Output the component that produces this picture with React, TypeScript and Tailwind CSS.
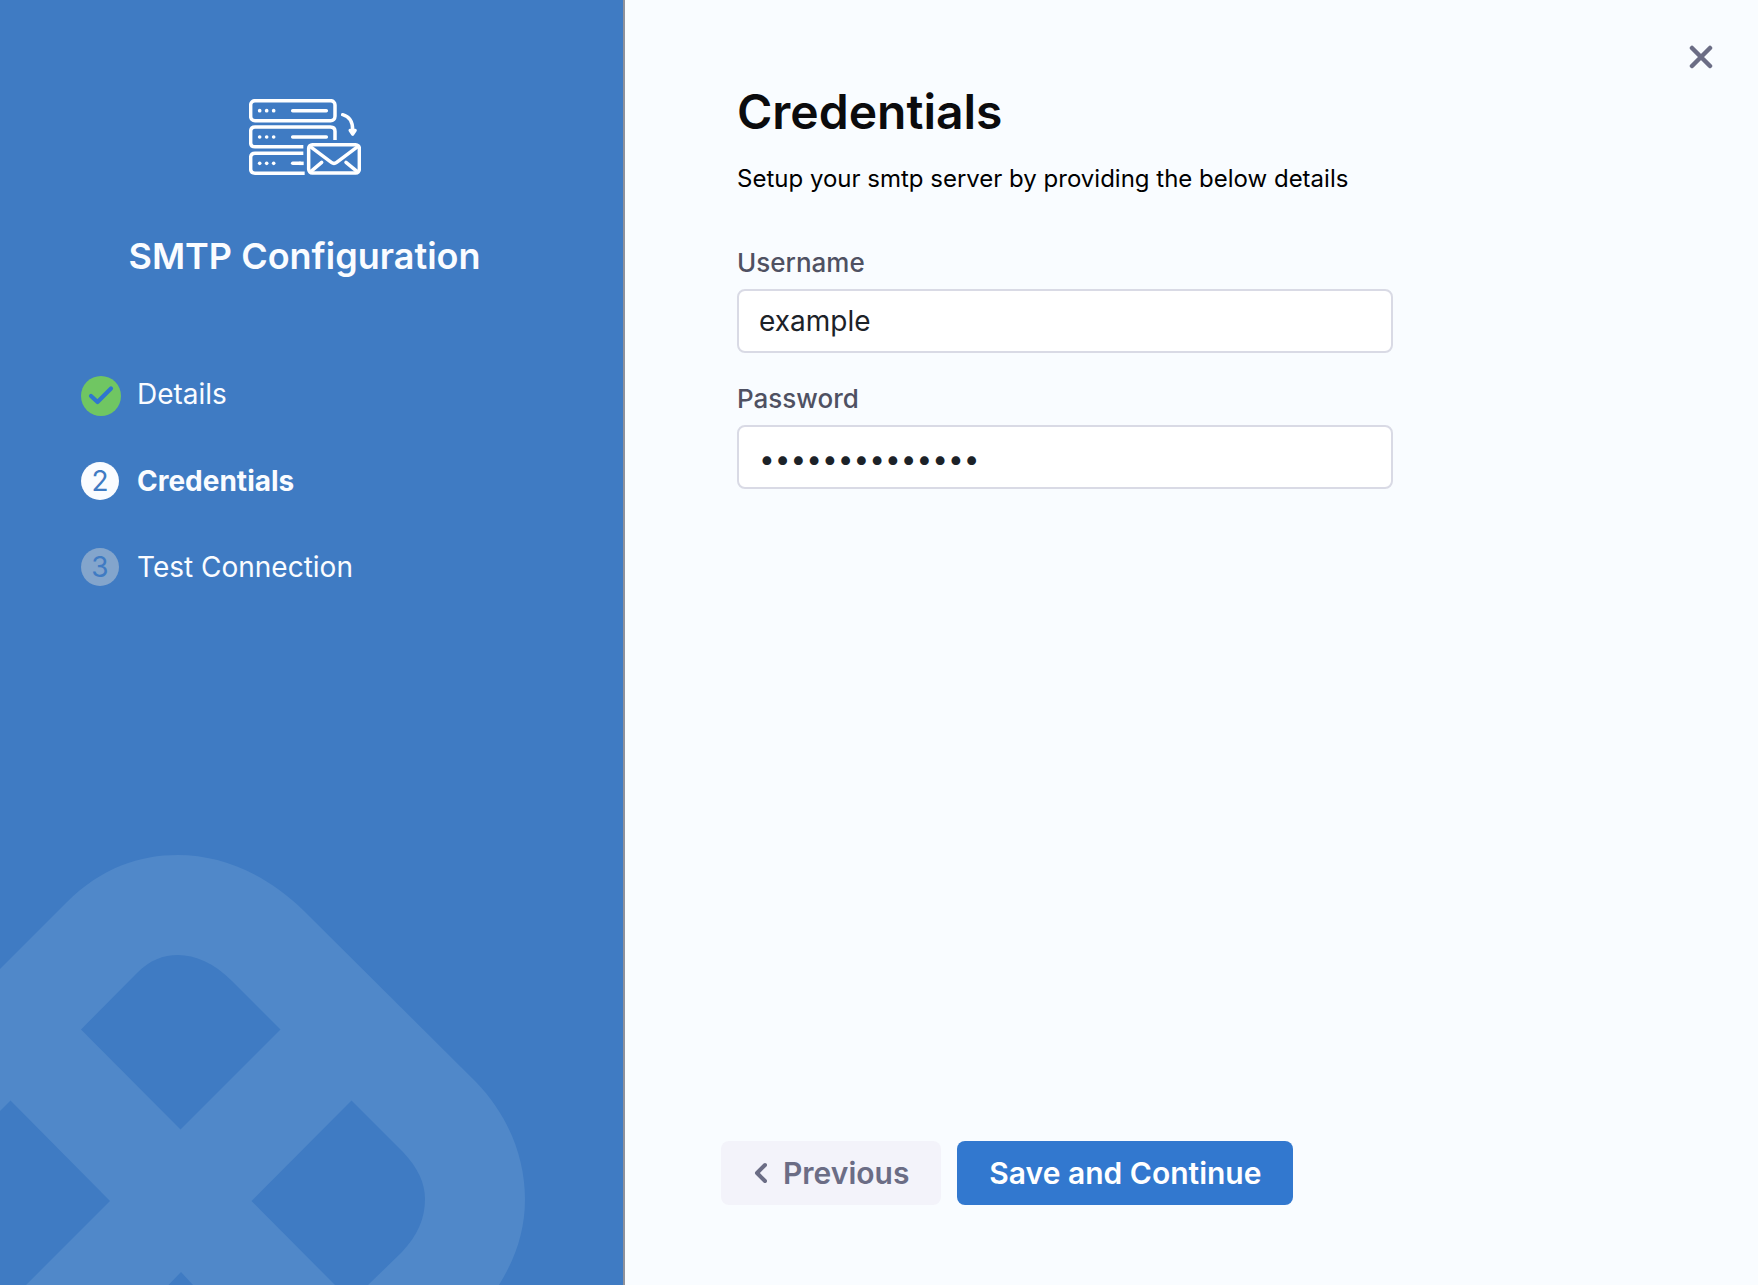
import React from "react";

function MailServerIcon() {
  return (
    <svg
      viewBox="57 57 336 228"
      className="h-[76px] w-[112px]"
      fill="none"
      stroke="#fff"
      strokeWidth="10.5"
      strokeLinecap="round"
      strokeLinejoin="round"
      aria-hidden="true"
    >
      <rect x="62" y="62" width="253" height="60" rx="13" />
      <path strokeLinecap="butt" d="M220 200.500H75Q62 200.500 62 188V154Q62 141 75 141H301Q315 141 315 154V180" />
      <path strokeLinecap="butt" d="M220 220H75Q62 220 62 233V267Q62 279.500 75 279.500H224" />
      <path d="M188 92H289M188 171H289" />
      <path d="M188 250H210" />
      <path d="M208 250H221" strokeLinecap="butt" />
      <g fill="#fff" stroke="none">
        <circle cx="89" cy="92" r="5.500" />
        <circle cx="110" cy="92" r="5.500" />
        <circle cx="131" cy="92" r="5.500" />
        <circle cx="89" cy="171" r="5.500" />
        <circle cx="110" cy="171" r="5.500" />
        <circle cx="131" cy="171" r="5.500" />
        <circle cx="89" cy="250" r="5.500" />
        <circle cx="110" cy="250" r="5.500" />
        <circle cx="131" cy="250" r="5.500" />
      </g>
      <path d="M338 104C358 109 368 126 368 150" />
      <path d="M360 151H376L368 163Z" fill="#fff" strokeWidth="9" />
      <rect x="236" y="194" width="152" height="85" rx="11" />
      <path d="M241 200L304 247Q312 253 320 247L383 200" />
      <path d="M243 274L275 247M381 274L348 247" />
    </svg>
  );
}

function Watermark() {
  return (
    <svg
      viewBox="0 0 526 431"
      className="pointer-events-none absolute bottom-0 left-0 h-[431px] w-[526px]"
      aria-hidden="true"
    >
      <path
        fill="#5088c9"
        fillRule="evenodd"
        d="M0 115L66 49C102 13 140 1 178 1C222 1 266 20 304 57L476 228C508 261 525 303 525 345C525 378 515 405 499 431H368L402 398C418 381 425 364 425 345C425 329 418 314 403 298L351.500 246.500L251.500 347L335 431H193L181 418L168.500 431H26L110 347L10.500 246.500L0 257ZM81 175.500L180.500 275.500L280.500 175.500L232 127C214 109 195 101 178 101C163 101 150 106 137 119Z"
      />
    </svg>
  );
}

function CheckBadge() {
  return (
    <svg viewBox="0 0 40 40" className="size-10" fill="none" aria-hidden="true">
      <circle cx="20" cy="20" r="20" fill="#70c662" />
      <path d="M10 20L16.500 26L30 12.500" stroke="#2f76cf" strokeWidth="4.200" strokeLinecap="round" strokeLinejoin="round" />
    </svg>
  );
}

const fieldClass =
  "mt-2 h-16 w-full rounded-lg border-2 border-[#d9dae5] bg-white px-5 text-[28px] text-[#1c2228] outline-none";

export default function App() {
  return (
    <div className="flex min-h-screen bg-[#f9fcff] font-['Inter',sans-serif]">
      <aside className="relative w-[625px] shrink-0 overflow-hidden border-r-2 border-[#8f929b] bg-[#3f7bc3] text-[#fafcff]">
        <Watermark />
        <div className="relative flex flex-col items-center pt-[99px] pr-[14px]">
          <MailServerIcon />
          <h2 className="mt-[57px] text-4xl leading-[48px] font-semibold">SMTP Configuration</h2>
        </div>
        <ol className="relative mt-[94px] flex flex-col gap-12 pl-[81px] text-[28px] leading-10">
          <li className="flex h-10 items-center">
            <span className="mt-1 w-14">
              <CheckBadge />
            </span>
            Details
          </li>
          <li className="flex h-[38px] items-center font-bold" aria-current="step">
            <span className="mr-[18px] flex size-[38px] items-center justify-center rounded-full bg-[#fafcff] font-normal text-[#3f7bc3]">
              2
            </span>
            Credentials
          </li>
          <li className="flex h-[38px] items-center">
            <span className="mr-[18px] flex size-[38px] items-center justify-center rounded-full bg-[#83a5cc] text-[#3f7bc3]">
              3
            </span>
            Test Connection
          </li>
        </ol>
      </aside>

      <main className="relative flex min-w-0 flex-1 flex-col px-24 pt-20 pb-20">
        <button type="button" aria-label="Close" className="absolute top-[41px] right-[41px] flex size-8 items-center justify-center">
          <svg viewBox="0 0 24 24" className="size-6" stroke="#6b6d85" strokeWidth="4.500" strokeLinecap="round" aria-hidden="true">
            <path d="M3 3L21 21M21 3L3 21" />
          </svg>
        </button>

        <form id="credentials" className="max-w-[672px] pl-4" onSubmit={(e) => e.preventDefault()}>
          <h1 className="text-5xl leading-[64px] font-semibold text-[#0b0b0d]">Credentials</h1>
          <p className="mt-[17px] text-2xl leading-9 whitespace-nowrap text-black">
            Setup your smtp server by providing the below details
          </p>
          <div className="mt-12">
            <label htmlFor="username" className="block text-[26px] leading-9 font-medium text-[#4f5162]">
              Username
            </label>
            <input id="username" type="text" defaultValue="example" className={fieldClass} />
          </div>
          <div className="mt-7">
            <label htmlFor="password" className="block text-[26px] leading-9 font-medium text-[#4f5162]">
              Password
            </label>
            <input id="password" type="password" defaultValue="smtp-secret-01" className={`${fieldClass} pt-1`} />
          </div>
        </form>

        <div className="mt-auto flex gap-4">
          <button
            type="button"
            className="flex h-16 items-center rounded-lg bg-[#f3f3fa] px-8 text-[30px] font-semibold text-[#6b6d85]"
          >
            <svg viewBox="0 0 14 22" className="mr-4 h-[22px] w-[14px]" fill="none" stroke="currentColor" strokeWidth="4" strokeLinecap="round" strokeLinejoin="round" aria-hidden="true">
              <path d="M12 3L4 11L12 19" />
            </svg>
            Previous
          </button>
          <button
            type="submit"
            form="credentials"
            className="h-16 rounded-lg bg-[#3278cf] px-8 text-[30px] font-semibold text-white"
          >
            Save and Continue
          </button>
        </div>
      </main>
    </div>
  );
}
